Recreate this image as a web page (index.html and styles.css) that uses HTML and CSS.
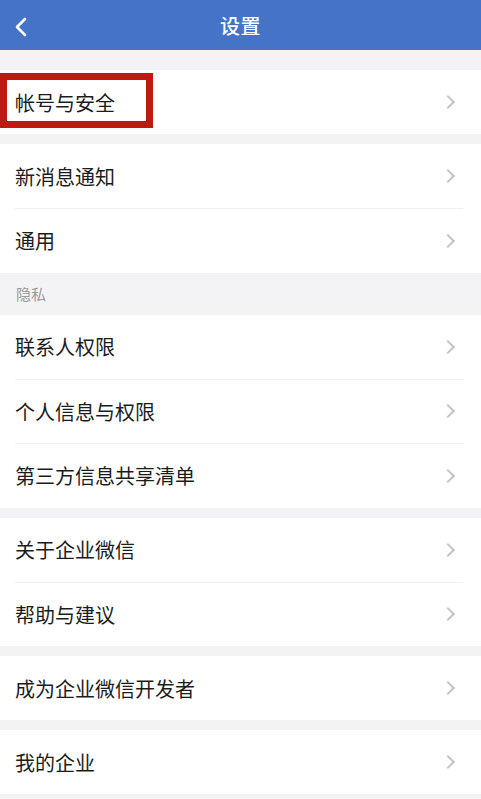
FILE: index.html
```html
<!DOCTYPE html>
<html lang="zh-CN">
<head>
  <meta charset="UTF-8" />
  <title>设置</title>
  <link rel="stylesheet" href="styles.css">
</head>
<body>

  <div class="top-bar">
    <svg class="back-icon" width="14" height="20" viewBox="0 0 14 20">
      <path d="M11 2 L3 10 L11 18" fill="none" stroke="#fff" stroke-width="2.6" stroke-linecap="round" stroke-linejoin="round"/>
    </svg>
    <h1 class="title">设置</h1>
  </div>

  <div class="page">
    <div class="group first">
      <div class="row">
        <span class="row-text">帐号与安全</span>
        <span class="chevron"></span>
        <div class="mark"></div>
      </div>
    </div>

    <div class="group">
      <div class="row">
        <span class="row-text">新消息通知</span>
        <span class="chevron"></span>
      </div>
      <div class="row">
        <span class="row-text">通用</span>
        <span class="chevron"></span>
      </div>
    </div>

    <div class="section-label">隐私</div>

    <div class="group no-gap">
      <div class="row">
        <span class="row-text">联系人权限</span>
        <span class="chevron"></span>
      </div>
      <div class="row">
        <span class="row-text">个人信息与权限</span>
        <span class="chevron"></span>
      </div>
      <div class="row">
        <span class="row-text">第三方信息共享清单</span>
        <span class="chevron"></span>
      </div>
    </div>

    <div class="group">
      <div class="row">
        <span class="row-text">关于企业微信</span>
        <span class="chevron"></span>
      </div>
      <div class="row">
        <span class="row-text">帮助与建议</span>
        <span class="chevron"></span>
      </div>
    </div>

    <div class="group">
      <div class="row">
        <span class="row-text">成为企业微信开发者</span>
        <span class="chevron"></span>
      </div>
    </div>

    <div class="group">
      <div class="row">
        <span class="row-text">我的企业</span>
        <span class="chevron"></span>
      </div>
    </div>
  </div>

</body>
</html>
```

FILE: styles.css
```css
body {
  margin: 0;
  background: #f3f3f5;
  font-family: "Noto Sans CJK SC", "Noto Sans", sans-serif;
  height: 799px;
  overflow: hidden;
}

.top-bar {
  height: 50px;
  background: #4473c8;
  display: flex;
  align-items: center;
  justify-content: center;
  position: relative;
}

.back-icon {
  position: absolute;
  left: 14px;
  top: 17px;
}

.title {
  margin: 0;
  color: #fff;
  font-size: 20px;
  font-weight: 500;
  letter-spacing: 0.5px;
}

.group {
  background: #fff;
  margin-top: 10px;
}

.group.first {
  margin-top: 20px;
}

.group.no-gap {
  margin-top: 0;
}

.row {
  height: 64px;
  display: flex;
  align-items: center;
  justify-content: space-between;
  padding: 0 26px 0 15px;
  position: relative;
}

.row + .row {
  height: 63.5px;
  border-top: 1px solid #efeff1;
  margin: 0 18px 0 15px;
  padding-left: 0;
  padding-right: 8px;
}

.row-text {
  font-size: 20px;
  color: #1c1c1c;
}

.chevron {
  width: 8px;
  height: 8px;
  border-top: 2px solid #c4c4c4;
  border-right: 2px solid #c4c4c4;
  transform: rotate(45deg);
  margin-right: 2px;
}

.section-label {
  height: 42px;
  padding-left: 16px;
  display: flex;
  align-items: center;
  font-size: 15px;
  color: #9a9a9a;
}

.mark {
  position: absolute;
  left: 0;
  top: 3px;
  width: 139px;
  height: 41px;
  border: 7px solid #bd1a13;
}
```
